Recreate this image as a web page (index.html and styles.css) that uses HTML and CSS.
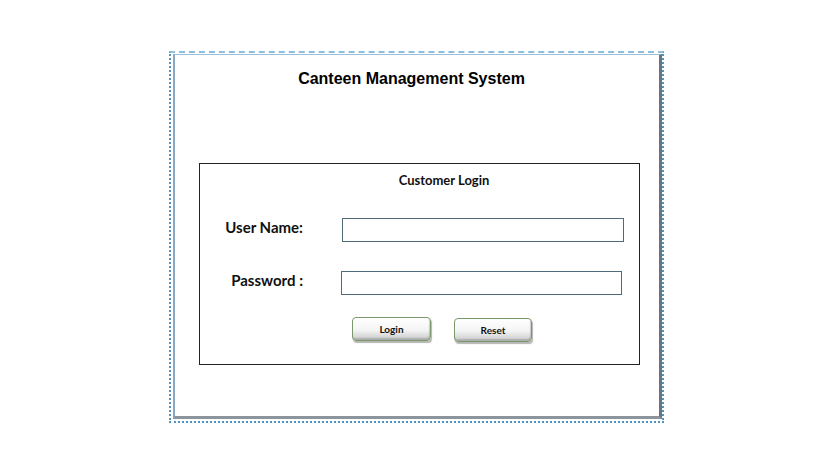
FILE: index.html
```html
<!DOCTYPE html>
<html>
<head>
<meta charset="utf-8">
<link rel="stylesheet" href="styles.css">
</head>
<body>
<div class="page">
  <div class="outer">
    <div class="inner">
      <h1 class="title">Canteen Management System</h1>
      <div class="login-box">
        <div class="login-head">Customer Login</div>
        <div class="form">
          <label class="lbl">User Name:</label>
          <input class="field" type="text">
          <label class="lbl lbl-pw">Password :</label>
          <input class="field field-pw" type="password">
        </div>
        <div class="buttons">
          <button class="btn">Login</button>
          <button class="btn btn-reset">Reset</button>
        </div>
      </div>
    </div>
  </div>
</div>
</body>
</html>
```
FILE: styles.css
```css
html, body {
  margin: 0;
  padding: 0;
  background: #ffffff;
}
.page {
  padding: 51px 0 0 169px;
}
.outer {
  width: 491px;
  height: 368px;
  border: 2px dotted #4f94c4;
  border-top: 2px dashed #8cbfe0;
}
.inner {
  box-sizing: border-box;
  width: 489px;
  height: 365px;
  margin: 1px 0 0 2px;
  border-left: 2px solid #8aa6c0;
  border-top: 1px solid #9cc0dc;
  border-right: 3px solid #6c747e;
  border-bottom: 3px solid #8c949c;
  background: #fff;
  display: flex;
  flex-direction: column;
}
.title {
  margin: 14px 0 0 0;
  padding-right: 11px;
  text-align: center;
  font-family: "Liberation Sans", Arial, sans-serif;
  font-size: 16px;
  font-weight: bold;
  line-height: 20px;
  color: #000;
}
.login-box {
  box-sizing: border-box;
  width: 441px;
  height: 202px;
  margin: 74px 0 0 24px;
  border: 1px solid #222;
  font-family: Lato, "Open Sans", sans-serif;
}
.login-head {
  margin-top: 7px;
  padding-left: 49px;
  text-align: center;
  font-size: 13px;
  font-weight: bold;
  line-height: 18px;
  color: #111;
}
.form {
  display: grid;
  grid-template-columns: 103px 282px;
  column-gap: 39px;
  row-gap: 29px;
  margin-top: 29px;
  align-items: start;
}
.lbl {
  text-align: right;
  font-size: 15px;
  font-weight: bold;
  line-height: 18px;
  color: #111;
}
.field {
  box-sizing: border-box;
  width: 282px;
  height: 24px;
  margin: 0;
  border: 1px solid #4f6a7a;
  border-radius: 0;
  background: #fff;
  outline: none;
}
.field-pw {
  width: 281px;
  margin-left: -1px;
}
.buttons {
  display: flex;
  gap: 23px;
  margin: 22px 0 0 152px;
}
.btn {
  box-sizing: border-box;
  width: 79px;
  height: 24px;
  padding: 0;
  border: 1px solid #7a9a6a;
  border-radius: 4px;
  background: linear-gradient(#ffffff 0%, #f4f4f4 55%, #c8c8c8 100%);
  box-shadow: 1px 2px 1px rgba(90, 90, 90, 0.45), inset -1px -2px 1px rgba(120, 120, 120, 0.35);
  font-family: Lato, "Open Sans", sans-serif;
  font-size: 10px;
  font-weight: bold;
  color: #111;
}
.btn-reset {
  width: 78px;
  margin-top: 1px;
}
```
